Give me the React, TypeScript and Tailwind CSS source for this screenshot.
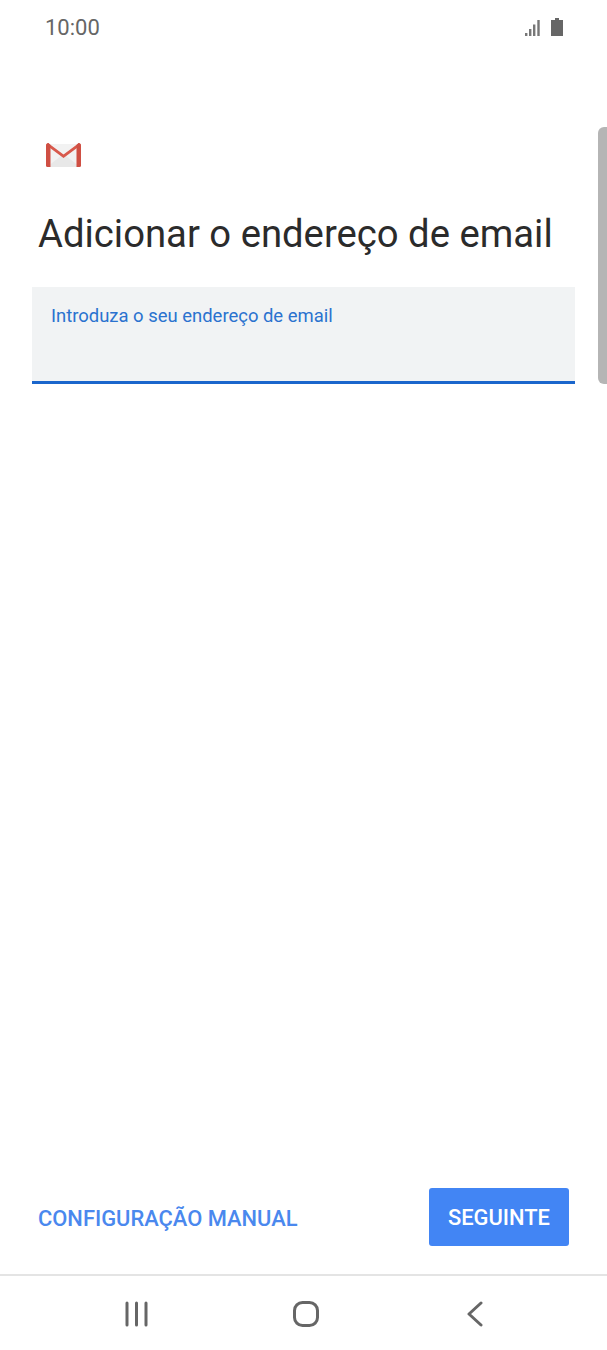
import React from "react";

function GmailLogo() {
  return (
    <svg width="37" height="26" viewBox="0 0 37 26" className="block">
      <path d="M2 2 L35 2 L35 25 L2 25 Z" fill="#f2f2f2" />
      <path d="M18.5 12 L35 25 L2 25 Z" fill="#e8e8e8" />
      <path d="M3 1 L18.5 12.5 L34 1 L36 3 L18.5 16 L1 3 Z" fill="#d8594c" />
      <path d="M1 3.5 Q1 1 3.5 1 L5.5 3 L5.5 25 L2.5 25 Q1 25 1 23.5 Z" fill="#cf4f43" />
      <path d="M36 3.5 Q36 1 33.5 1 L31.5 3 L31.5 25 L34.5 25 Q36 25 36 23.5 Z" fill="#cf4f43" />
    </svg>
  );
}

function StatusBar() {
  return (
    <div className="h-[56px] shrink-0 flex items-center justify-between pl-[45px] pr-[44px]">
      <span className="text-[22px] text-[#666666] leading-none">10:00</span>
      <div className="flex items-end gap-[11px] mt-[-2px]">
        <svg width="15" height="16" viewBox="0 0 15 16" className="block">
          <rect x="0" y="13" width="2.4" height="3" fill="#777777" />
          <rect x="4" y="9" width="2.4" height="7" fill="#777777" />
          <rect x="8" y="4.5" width="2.4" height="11.5" fill="#777777" />
          <rect x="12.3" y="0" width="2.4" height="16" fill="#777777" />
        </svg>
        <svg width="12" height="18" viewBox="0 0 12 18" className="block">
          <path d="M4 0 H8 V2 H12 V18 H0 V2 H4 Z" fill="#666666" />
        </svg>
      </div>
    </div>
  );
}

function NavBar() {
  return (
    <div className="h-[76px] shrink-0 border-t-2 border-[#e4e4e4] grid grid-cols-3 items-center pl-[52px] pr-[48px] pt-[2px]">
      <svg width="26" height="26" viewBox="0 0 26 26" className="justify-self-center">
        <path d="M3 2 V24 M12.5 2 V24 M22 2 V24" stroke="#666666" strokeWidth="3" strokeLinecap="round" fill="none" />
      </svg>
      <svg width="28" height="28" viewBox="0 0 28 28" className="justify-self-center">
        <rect x="2.5" y="2.5" width="23" height="23" rx="8" stroke="#666666" strokeWidth="3" fill="none" />
      </svg>
      <svg width="18" height="26" viewBox="0 0 18 26" className="justify-self-center">
        <path d="M15 2 L3 13 L15 24" stroke="#666666" strokeWidth="3" strokeLinecap="round" strokeLinejoin="round" fill="none" />
      </svg>
    </div>
  );
}

export default function App() {
  return (
    <div className="relative h-[1350px] w-[607px] overflow-hidden bg-white flex flex-col font-['Roboto',sans-serif]">
      <StatusBar />
      <main className="flex-1 flex flex-col">
        <div className="mt-[86px] ml-[45px]">
          <GmailLogo />
        </div>
        <h1 className="mt-[44px] ml-[38px] text-[38.25px] leading-[44px] font-normal text-[#2b2b2b] whitespace-nowrap">
          Adicionar o endereço de email
        </h1>
        <div className="mt-[31px] mx-[32px] h-[97px] bg-[#f1f3f4] border-b-[3px] border-[#1a66cc] px-[19px] pt-[17px]">
          <label className="block text-[18.45px] leading-[24px] text-[#2a72cf]">
            Introduza o seu endereço de email
          </label>
        </div>
        <div className="mt-auto mb-[28px] flex items-center justify-between pl-[38px] pr-[38px]">
          <button className="pt-[3px] text-[21.9px] font-medium text-[#4a88ee] leading-none">
            CONFIGURAÇÃO MANUAL
          </button>
          <button className="w-[140px] h-[58px] pt-[3px] rounded-[3px] bg-[#4285f4] text-white text-[21.9px] font-medium">
            SEGUINTE
          </button>
        </div>
      </main>
      <NavBar />
      {/* overlay scrollbar at the right edge */}
      <div className="absolute right-0 top-[127px] h-[257px] w-[9px] rounded-l-[6px] bg-[#b5b5b5]" />
    </div>
  );
}
